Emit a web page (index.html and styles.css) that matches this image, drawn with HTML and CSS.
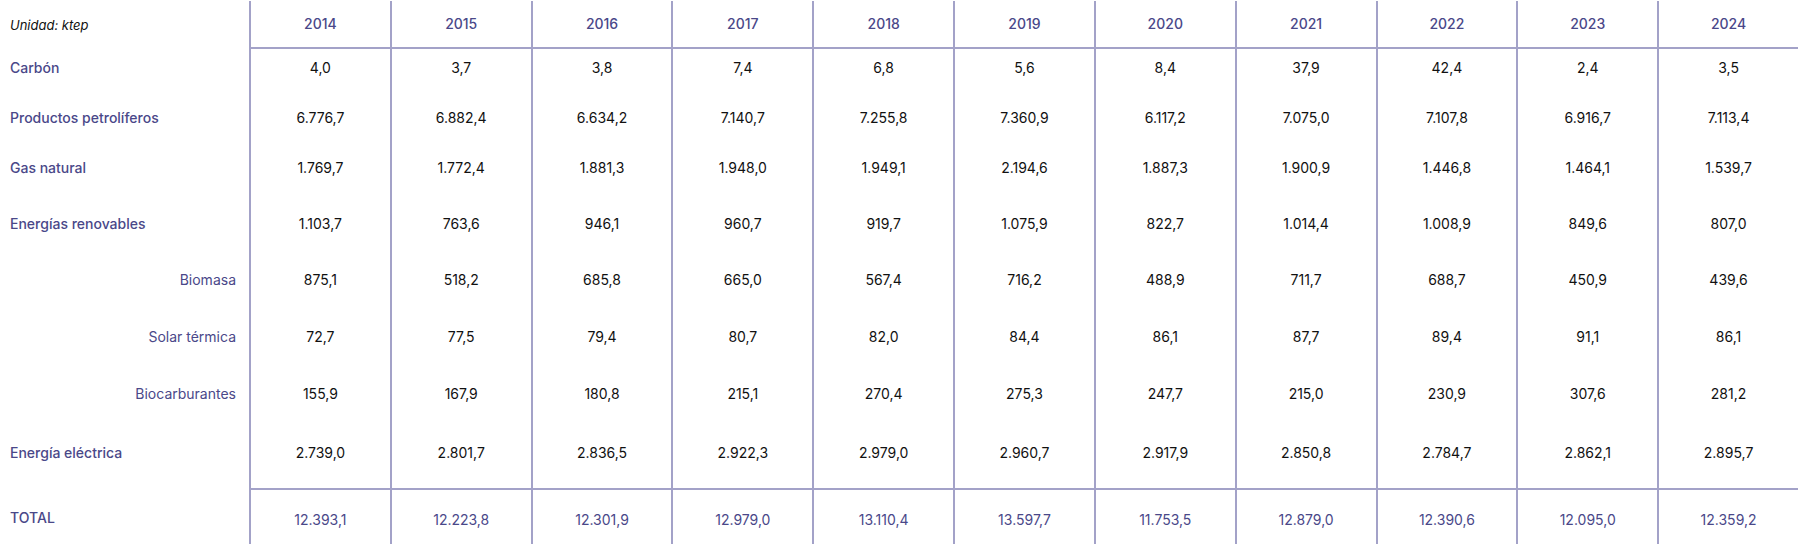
FILE: index.html
```html
<!DOCTYPE html>
<html lang="es">
<head>
    <meta charset="UTF-8">
    <meta name="viewport" content="width=device-width, initial-scale=1.0">
    <title>Consumo de energía final</title>
    <link rel="stylesheet" href="styles.css">
</head>
<body>

<table class="energy">
    <colgroup>
        <col class="label-col">
    </colgroup>
    <thead>
        <tr>
            <th class="unit">Unidad: ktep</th>
            <th>2014</th>
            <th>2015</th>
            <th>2016</th>
            <th>2017</th>
            <th>2018</th>
            <th>2019</th>
            <th>2020</th>
            <th>2021</th>
            <th>2022</th>
            <th>2023</th>
            <th>2024</th>
        </tr>
    </thead>
    <tbody>
        <tr class="short">
            <th>Carbón</th>
            <td>4,0</td><td>3,7</td><td>3,8</td><td>7,4</td><td>6,8</td><td>5,6</td><td>8,4</td><td>37,9</td><td>42,4</td><td>2,4</td><td>3,5</td>
        </tr>
        <tr class="short">
            <th>Productos petrolíferos</th>
            <td>6.776,7</td><td>6.882,4</td><td>6.634,2</td><td>7.140,7</td><td>7.255,8</td><td>7.360,9</td><td>6.117,2</td><td>7.075,0</td><td>7.107,8</td><td>6.916,7</td><td>7.113,4</td>
        </tr>
        <tr>
            <th>Gas natural</th>
            <td>1.769,7</td><td>1.772,4</td><td>1.881,3</td><td>1.948,0</td><td>1.949,1</td><td>2.194,6</td><td>1.887,3</td><td>1.900,9</td><td>1.446,8</td><td>1.464,1</td><td>1.539,7</td>
        </tr>
        <tr>
            <th>Energías renovables</th>
            <td>1.103,7</td><td>763,6</td><td>946,1</td><td>960,7</td><td>919,7</td><td>1.075,9</td><td>822,7</td><td>1.014,4</td><td>1.008,9</td><td>849,6</td><td>807,0</td>
        </tr>
        <tr class="sub">
            <th>Biomasa</th>
            <td>875,1</td><td>518,2</td><td>685,8</td><td>665,0</td><td>567,4</td><td>716,2</td><td>488,9</td><td>711,7</td><td>688,7</td><td>450,9</td><td>439,6</td>
        </tr>
        <tr class="sub">
            <th>Solar térmica</th>
            <td>72,7</td><td>77,5</td><td>79,4</td><td>80,7</td><td>82,0</td><td>84,4</td><td>86,1</td><td>87,7</td><td>89,4</td><td>91,1</td><td>86,1</td>
        </tr>
        <tr class="sub">
            <th>Biocarburantes</th>
            <td>155,9</td><td>167,9</td><td>180,8</td><td>215,1</td><td>270,4</td><td>275,3</td><td>247,7</td><td>215,0</td><td>230,9</td><td>307,6</td><td>281,2</td>
        </tr>
        <tr class="last">
            <th>Energía eléctrica</th>
            <td>2.739,0</td><td>2.801,7</td><td>2.836,5</td><td>2.922,3</td><td>2.979,0</td><td>2.960,7</td><td>2.917,9</td><td>2.850,8</td><td>2.784,7</td><td>2.862,1</td><td>2.895,7</td>
        </tr>
    </tbody>
    <tfoot>
        <tr>
            <th>TOTAL</th>
            <td>12.393,1</td><td>12.223,8</td><td>12.301,9</td><td>12.979,0</td><td>13.110,4</td><td>13.597,7</td><td>11.753,5</td><td>12.879,0</td><td>12.390,6</td><td>12.095,0</td><td>12.359,2</td>
        </tr>
    </tfoot>
</table>

</body>
</html>
```

FILE: styles.css
```css
/* tabla de consumo */
body {
    margin: 0;
    padding-top: 1px;
    background-color: #fff;
    font-family: Inter, "Liberation Sans", sans-serif;
}

.energy {
    width: 1798px;
    table-layout: fixed;
    border-collapse: separate;
    border-spacing: 0;
    font-size: 14px;
    line-height: 20px;
    color: #111;
}

.label-col {
    width: 249px;
}

.energy th,
.energy td {
    padding: 0;
    text-align: center;
    vertical-align: top;
}

/* columnas de años */
.energy td,
.energy thead th {
    border-left: 2px solid #a3a2c8;
}

.energy thead th {
    height: 46px;
    vertical-align: middle;
    color: #4a4889;
    font-weight: 500;
    border-bottom: 2px solid #a3a2c8;
}

.energy thead th.unit {
    border: none;
    text-align: left;
    padding-left: 10px;
    font-size: 13px;
    font-style: italic;
    font-weight: 400;
    color: #111;
}

.energy tbody tr {
    height: 56px;
}

.energy tbody tr.short {
    height: 50px;
}

.energy tbody tr.sub {
    height: 57px;
}

.energy tbody th,
.energy tbody td {
    padding-top: 9px;
}

.energy tbody tr.last th,
.energy tbody tr.last td {
    padding-top: 11px;
}

.energy tbody th,
.energy tfoot th {
    text-align: left;
    padding-left: 10px;
    font-weight: 500;
    color: #4a4889;
}

.energy tbody tr.sub th {
    text-align: right;
    padding-right: 13px;
    font-weight: 400;
}

.energy tfoot tr {
    height: 56px;
}

.energy tfoot th,
.energy tfoot td {
    padding-top: 20px;
    color: #4a4889;
}

.energy tfoot td {
    border-top: 2px solid #a3a2c8;
}
```
